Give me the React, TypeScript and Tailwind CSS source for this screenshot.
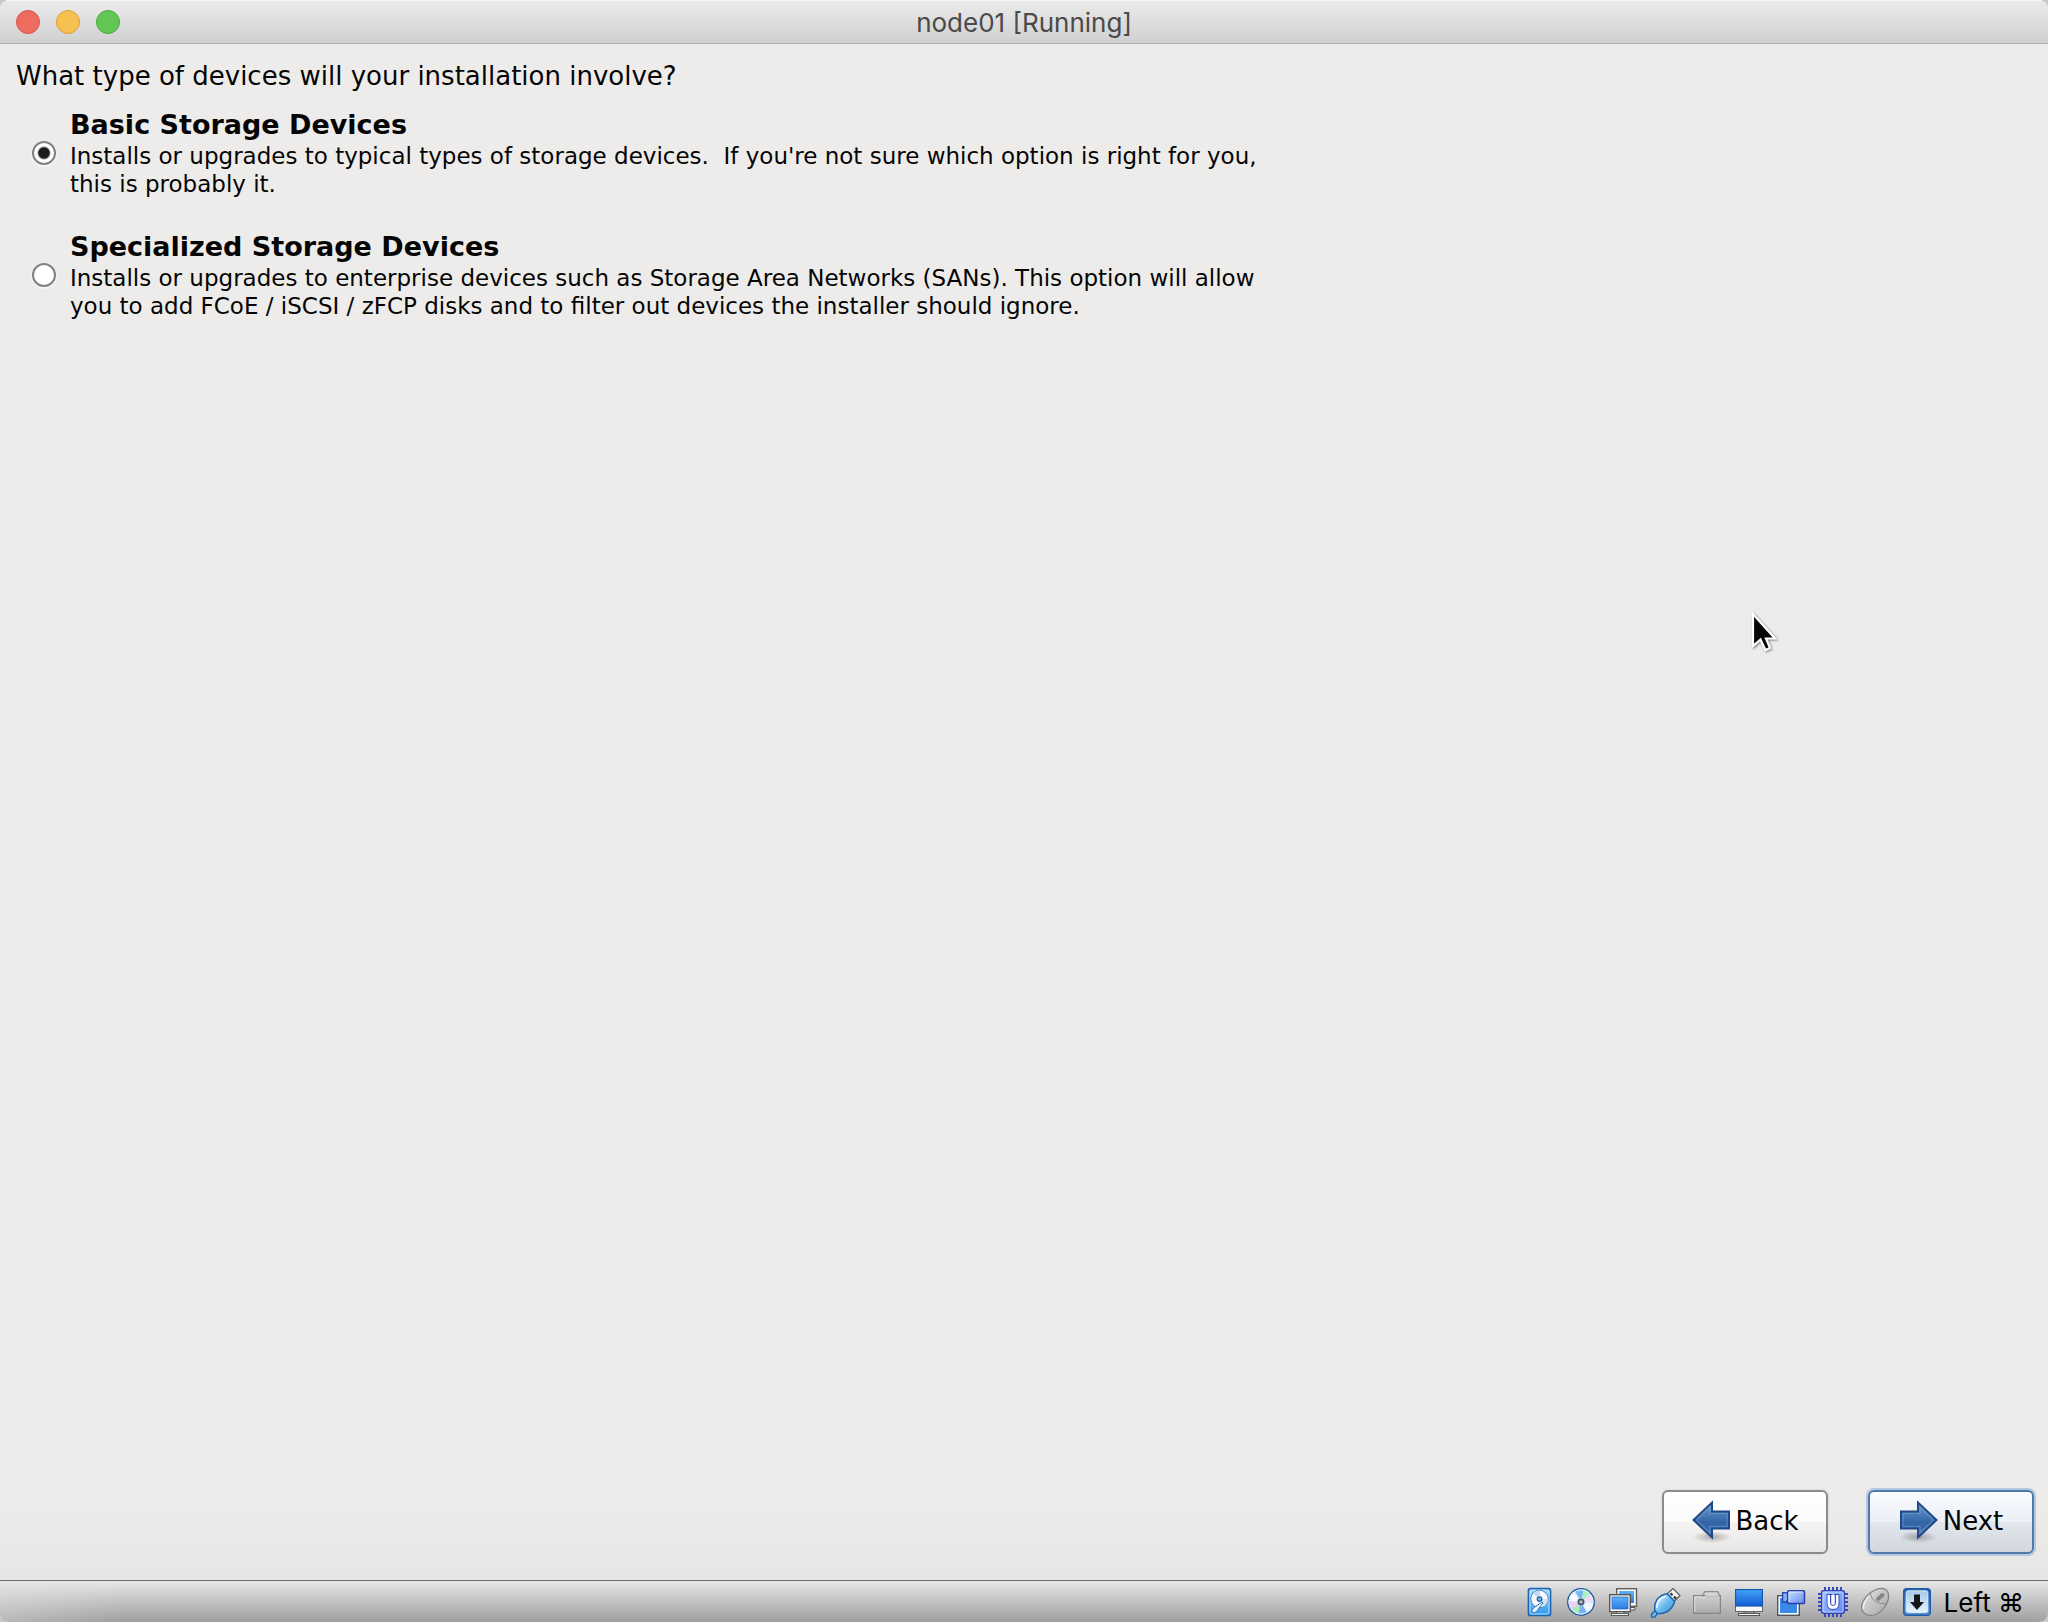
import React from "react";

function TrafficLight({ label, className }: { label: string; className: string }) {
  return <button type="button" aria-label={label} className={`size-6 rounded-full border ${className}`} />;
}

function StorageOption({
  id,
  title,
  children,
  checked,
}: {
  id: string;
  title: string;
  children: React.ReactNode;
  checked?: boolean;
}) {
  return (
    <label htmlFor={id} className="flex max-w-[1240px] items-center gap-3.5">
      <input
        id={id}
        type="radio"
        name="storage"
        defaultChecked={checked}
        className="size-6 shrink-0 appearance-none rounded-full border-2 border-[#83817f] bg-white shadow-[0_1px_1px_1px_#f6f5f4] checked:bg-[radial-gradient(circle,#1c1c1c_0,#1c1c1c_5px,#ffffff_7px)]"
      />
      <span className="block">
        <span className="block text-[27px] leading-[34px] font-bold">{title}</span>
        <span className="block text-[23px] leading-7">{children}</span>
      </span>
    </label>
  );
}

function ButtonArrow({ flip }: { flip?: boolean }) {
  return (
    <svg width="40" height="44" viewBox="0 0 40 44" className={flip ? "-scale-x-100" : ""} aria-hidden="true">
      <defs>
        <linearGradient id="arrowFill" x1="0" y1="0" x2="0" y2="1">
          <stop offset="0" stopColor="#6d9ccd" />
          <stop offset="0.5" stopColor="#3a6cae" />
          <stop offset="0.55" stopColor="#3163a5" />
          <stop offset="1" stopColor="#4577b6" />
        </linearGradient>
        <radialGradient id="arrowShadow">
          <stop offset="0" stopColor="#000" stopOpacity="0.28" />
          <stop offset="1" stopColor="#000" stopOpacity="0" />
        </radialGradient>
      </defs>
      <ellipse cx="19" cy="38" rx="19" ry="6" fill="url(#arrowShadow)" />
      <path d="M2 12.500H19V3.500L37.500 21L19 38.500V29.500H2Z" fill="url(#arrowFill)" stroke="#204a87" strokeWidth="2" />
      <path d="M4 14.500H21V8L34.500 21L21 34V27.500H4Z" fill="none" stroke="#7ba3d1" strokeOpacity="0.5" strokeWidth="1.200" />
    </svg>
  );
}

function HardDiskIcon() {
  return (
    <svg width="32" height="32" viewBox="0 0 32 32" aria-label="Hard disks">
      <defs>
        <linearGradient id="hd" x1="0" y1="0" x2="0" y2="1">
          <stop offset="0" stopColor="#a5dcfc" />
          <stop offset="1" stopColor="#2f97ea" />
        </linearGradient>
      </defs>
      <rect x="5.500" y="2.700" width="22" height="26.800" rx="2" fill="url(#hd)" stroke="#1a62b4" strokeWidth="1.700" />
      <rect x="7" y="4.200" width="19" height="23.800" rx="1" fill="none" stroke="#c4eafd" strokeWidth="0.900" />
      <circle cx="16.500" cy="13" r="8.800" fill="#f4f8fc" stroke="#3c86cb" strokeWidth="1" />
      <path d="M16.500 13L10 7.500A8.500 8.500 0 0 1 17 4.600Z" fill="#c3d9f1" />
      <path d="M16.500 13L25 13A8.500 8.500 0 0 1 21 20Z" fill="#cfe0f4" />
      <circle cx="16.500" cy="13" r="2.200" fill="#72bfee" stroke="#1d5da6" strokeWidth="1.300" />
      <path d="M20 17L13.500 25.500Q11 28 9 26Q8 24 10.500 22L19 16Z" fill="#f0f9ff" stroke="#2470b7" strokeWidth="1" />
    </svg>
  );
}

function OpticalDiscIcon() {
  return (
    <svg width="32" height="32" viewBox="0 0 32 32" aria-label="Optical drives">
      <circle cx="16" cy="16" r="13.200" fill="#c4e1f8" stroke="#22589f" strokeWidth="1.500" />
      <path d="M16 16L10 4.500A13 13 0 0 1 19 3.300Z" fill="#77b4f2" />
      <path d="M16 16L19 3.300A12.500 12.500 0 0 1 25 7Z" fill="#a9f3b5" />
      <path d="M16 16L26 8.500A12.500 12.500 0 0 1 28.500 16Z" fill="#f5d9f4" />
      <path d="M16 16L28.500 17A12.500 12.500 0 0 1 22 27Z" fill="#f0f8fe" />
      <path d="M16 16L22 27A12.500 12.500 0 0 1 13 28.200Z" fill="#79b3ef" />
      <path d="M16 16L13 28.200A12.500 12.500 0 0 1 6.500 24Z" fill="#a2f0b0" />
      <path d="M16 16L6.500 24A12.500 12.500 0 0 1 3.500 15Z" fill="#eccff3" />
      <path d="M16 16L3.500 15A12.500 12.500 0 0 1 9 5.500Z" fill="#f4fafe" />
      <circle cx="16" cy="16" r="12" fill="none" stroke="#e4f4fd" strokeWidth="0.900" />
      <circle cx="16" cy="16" r="4.300" fill="#c7dcf0" />
      <circle cx="16" cy="16" r="2.600" fill="#bdbdbd" stroke="#3c536f" strokeWidth="1.600" />
    </svg>
  );
}

function NetworkIcon() {
  return (
    <svg width="32" height="32" viewBox="0 0 32 32" aria-label="Network">
      <defs>
        <linearGradient id="net" x1="0" y1="0" x2="0" y2="1">
          <stop offset="0" stopColor="#5cb2f9" />
          <stop offset="1" stopColor="#2d78e6" />
        </linearGradient>
      </defs>
      <path d="M22 21.500H28V24H22Z" fill="#eee" stroke="#555" strokeWidth="1" />
      <rect x="9.700" y="2.700" width="19.800" height="17.600" fill="#f8f8f8" stroke="#5f5f5f" strokeWidth="1.400" />
      <rect x="12" y="5" width="15" height="12" fill="url(#net)" />
      <path d="M9.500 26V29H17V26" fill="#eee" stroke="#5b5b5b" strokeWidth="1" />
      <rect x="2.700" y="8.700" width="20.600" height="17" fill="#fafafa" stroke="#555" strokeWidth="1.400" />
      <rect x="5" y="11" width="16" height="12" fill="url(#net)" stroke="#2466c2" strokeWidth="0.700" />
      <rect x="4.500" y="27.500" width="17" height="2" fill="#f4f4f4" stroke="#5b5b5b" strokeWidth="1" />
    </svg>
  );
}

function UsbIcon() {
  return (
    <svg width="32" height="32" viewBox="0 0 32 32" aria-label="USB devices">
      <defs>
        <linearGradient id="usb" x1="0" y1="0" x2="1" y2="1">
          <stop offset="0.200" stopColor="#d0eefd" />
          <stop offset="0.500" stopColor="#6fc0f2" />
          <stop offset="1" stopColor="#338bd2" />
        </linearGradient>
      </defs>
      <path d="M17 9L24 2.500L31 9.500L24.500 16Z" fill="#f6f6f6" stroke="#5a5a5a" strokeWidth="1.200" />
      <path d="M21.500 7.300l2 2M25 10.600l2 2" stroke="#333" strokeWidth="2.200" />
      <path d="M16.500 8Q18 7.600 19 8.600L25 14.600Q25.800 15.600 25.300 16.700Q22.500 23.500 17.500 26Q13 28 8.300 27.600L5.800 25Q4.800 17 9 12.200Q12.500 9 16.500 8Z" fill="url(#usb)" stroke="#2165aa" strokeWidth="1.500" />
      <path d="M7.800 22Q8 16.500 11 13.300Q13.300 11.200 17 10.200" fill="none" stroke="#f0faff" strokeWidth="1.400" />
      <path d="M6 25L8.300 27.300L6 31L3.500 31.300L2.300 30L3 27.500Z" fill="#6bbaf0" stroke="#2165aa" strokeWidth="1.400" />
    </svg>
  );
}

function FolderIcon() {
  return (
    <svg width="32" height="32" viewBox="0 0 32 32" aria-label="Shared folders">
      <defs>
        <linearGradient id="fold" x1="0" y1="0" x2="0" y2="1">
          <stop offset="0" stopColor="#cfcfcf" />
          <stop offset="1" stopColor="#aaaaaa" />
        </linearGradient>
      </defs>
      <path d="M11 10L14 5.700H27L28.500 10V12H11Z" fill="#d6d6d6" stroke="#8d8d8d" strokeWidth="1.200" />
      <path d="M2.600 9.600H29.400V27.400H2.600Z" fill="url(#fold)" stroke="#858585" strokeWidth="1.200" />
      <path d="M3.800 26V10.800H10.500L12.500 12.700L15 9.600H27.500" fill="none" stroke="#e5e5e5" strokeWidth="0.900" />
    </svg>
  );
}

function DisplayIcon() {
  return (
    <svg width="32" height="32" viewBox="0 0 32 32" aria-label="Display">
      <defs>
        <linearGradient id="disp" x1="0" y1="0" x2="0" y2="1">
          <stop offset="0" stopColor="#41a3f6" />
          <stop offset="1" stopColor="#145bd2" />
        </linearGradient>
      </defs>
      <path d="M11 26H21V28.500H11Z" fill="#e3e3e3" stroke="#555" strokeWidth="1" />
      <rect x="2.500" y="19" width="27" height="6.500" fill="#f8f8f8" stroke="#5e6469" strokeWidth="1" />
      <rect x="2.600" y="3.600" width="26.800" height="16.400" fill="url(#disp)" stroke="#1559ae" strokeWidth="1.200" />
      <rect x="5.500" y="27.500" width="21" height="2" fill="#f5f5f5" stroke="#555" strokeWidth="1" />
    </svg>
  );
}

function RecordingIcon() {
  return (
    <svg width="32" height="32" viewBox="0 0 32 32" aria-label="Video capture">
      <defs>
        <linearGradient id="cam" x1="0" y1="0" x2="1" y2="1">
          <stop offset="0" stopColor="#c3dfff" />
          <stop offset="1" stopColor="#6a8cf0" />
        </linearGradient>
      </defs>
      <rect x="2.700" y="9.700" width="21.600" height="19.600" fill="#fafafa" stroke="#4f555d" strokeWidth="1.400" />
      <rect x="5" y="12" width="17" height="15" fill="#388ae6" />
      <path d="M7.600 6.600H11L13 8.500V14L11 16H7.600Z" fill="#7fb0f6" stroke="#2b3fa8" strokeWidth="1.300" />
      <rect x="12.700" y="4.700" width="16.800" height="12.800" rx="1" fill="url(#cam)" stroke="#2c3ca6" strokeWidth="1.500" />
      <path d="M14 16V6H28" fill="none" stroke="#dcebff" strokeWidth="0.900" />
    </svg>
  );
}

function ChipIcon() {
  return (
    <svg width="32" height="32" viewBox="0 0 32 32" aria-label="Processor features">
      <defs>
        <linearGradient id="chip" x1="0" y1="0" x2="1" y2="1">
          <stop offset="0" stopColor="#a9ccff" />
          <stop offset="1" stopColor="#5c82f0" />
        </linearGradient>
      </defs>
      <path d="M8 1V31M12 1V31M16 1V31M20 1V31M24 1V31M1 8H31M1 12H31M1 16H31M1 20H31M1 24H31" stroke="#3a4ab8" strokeWidth="2" />
      <rect x="4.700" y="4.700" width="22.600" height="22.600" rx="1.500" fill="url(#chip)" stroke="#3346b8" strokeWidth="1.500" />
      <rect x="6" y="6" width="20" height="20" rx="1" fill="none" stroke="#c6dcff" strokeWidth="0.900" />
      <path d="M10 8.500H22V17Q22 23.500 16 23.500Q10 23.500 10 17Z" fill="#f7faff" stroke="#3d50ba" strokeWidth="1" />
      <path d="M13.500 9V17.500Q14 19.500 16 19.500Q18 19.500 18.500 17.500V9" fill="#c9dbfd" stroke="#3d50ba" strokeWidth="1" />
      <path d="M16 8.500V18.500" stroke="#ffffff" strokeWidth="2" />
    </svg>
  );
}

function MouseIcon() {
  return (
    <svg width="32" height="32" viewBox="0 0 32 32" aria-label="Mouse integration">
      <defs>
        <linearGradient id="mouse" x1="0" y1="0" x2="1" y2="1">
          <stop offset="0" stopColor="#e4e4e4" />
          <stop offset="1" stopColor="#a5a5a5" />
        </linearGradient>
      </defs>
      <path d="M15 4.500Q23 0.500 27.500 4Q31.500 9 28 17Q24.500 25 17 28.500Q9 31 5 27Q0.500 23 4 15.500Q8 8 15 4.500Z" fill="url(#mouse)" stroke="#848484" strokeWidth="1.200" />
      <path d="M11 7Q13 18 28 18" fill="none" stroke="#8b8b8b" strokeWidth="1" />
      <path d="M19 13L23.500 9" stroke="#858585" strokeWidth="4" strokeLinecap="round" />
      <path d="M4.500 23Q4 16 10.500 9.500" fill="none" stroke="#f1f1f1" strokeWidth="1.300" />
    </svg>
  );
}

function KeyboardCaptureIcon() {
  return (
    <svg width="32" height="32" viewBox="0 0 32 32" aria-label="Keyboard capture">
      <defs>
        <linearGradient id="keyb" x1="0" y1="0" x2="0" y2="1">
          <stop offset="0" stopColor="#1f62b2" />
          <stop offset="1" stopColor="#5c98d8" />
        </linearGradient>
        <linearGradient id="keyf" x1="0" y1="0" x2="0" y2="1">
          <stop offset="0" stopColor="#a6c9ea" />
          <stop offset="1" stopColor="#e4f2fd" />
        </linearGradient>
      </defs>
      <rect x="2.700" y="2.700" width="26.600" height="26.600" rx="3" fill="url(#keyb)" stroke="#1f5aa6" strokeWidth="1.400" />
      <rect x="5.200" y="4.800" width="21.600" height="21.600" rx="2" fill="url(#keyf)" stroke="#e4f1fb" strokeWidth="0.900" />
      <path d="M13 8.500H19V16H23L16 24L9 16H13Z" fill="#161616" />
    </svg>
  );
}

function Pointer() {
  return (
    <svg width="32" height="44" viewBox="0 0 32 44" className="absolute top-[610px] left-[1750px] drop-shadow-[1px_1px_1px_rgba(0,0,0,0.45)]" aria-hidden="true">
      <path d="M3 4V36L10.500 29.500L15.500 40L20 38L16 28.500H25Z" fill="#060606" stroke="#fff" strokeWidth="2.200" />
    </svg>
  );
}

export default function App() {
  return (
    <div className="bg-[#c9c9c9]">
      <div className="relative flex min-h-screen flex-col overflow-hidden rounded-[9px] bg-[#edecea] font-['DejaVu_Sans',sans-serif] text-[#050505]">
        <header className="grid h-11 grid-cols-[1fr_auto_1fr] items-center border-t border-b border-t-[#f8f8f8] border-b-[#b0afae] bg-linear-to-b from-[#ebebeb] to-[#d0d0d0] px-4">
          <div className="flex gap-4">
            <TrafficLight label="Close" className="border-[#dc5449] bg-[#ee6b60]" />
            <TrafficLight label="Minimize" className="border-[#dca03c] bg-[#f6c050]" />
            <TrafficLight label="Zoom" className="border-[#4aa93c] bg-[#62c655]" />
          </div>
          <h1 className="pt-0.5 font-[Inter,sans-serif] text-[26px] leading-8 text-[#4a4a4a]">node01 [Running]</h1>
        </header>

        <main className="flex flex-1 flex-col bg-[linear-gradient(to_top,#e7e6e4,#edecea_80px)]">
          <fieldset className="flex-1 pt-4">
            <legend className="float-left w-full px-4 text-[26px] leading-8">What type of devices will your installation involve?</legend>
            <div className="clear-both flex flex-col gap-8 pt-4 pl-8">
              <StorageOption id="basic" title="Basic Storage Devices" checked>
                Installs or upgrades to typical types of storage devices.&nbsp; If you&#39;re not sure which option is right for you, this is probably it.
              </StorageOption>
              <StorageOption id="specialized" title="Specialized Storage Devices">
                Installs or upgrades to enterprise devices such as Storage Area Networks (SANs). This option will allow you to add FCoE / iSCSI / zFCP disks and to filter out devices the installer should ignore.
              </StorageOption>
            </div>
          </fieldset>

          <div className="flex justify-end gap-10 pr-3.5 pb-[26px] text-[26px] leading-8">
            <button type="button" className="flex h-16 w-[166px] items-center justify-center gap-1 rounded-md border-2 border-[#8d8b89] bg-[linear-gradient(#ffffff,#fbfbfb_50%,#f5f4f4_50%,#e8e7e5)] pb-0.5 shadow-[0_0_1px_1px_#e2e1df]">
              <ButtonArrow flip />
              Back
            </button>
            <button type="button" className="flex h-16 w-[166px] items-center justify-center gap-1 rounded-md border-2 border-[#5279a9] bg-[linear-gradient(#f8fbff,#ebeff6_50%,#e2e6ed_50%,#d3d7dd)] pb-0.5 shadow-[0_0_0_2px_#b3c8e2]">
              <ButtonArrow />
              Next
            </button>
          </div>
        </main>

        <footer className="flex h-[42px] items-center justify-end gap-2.5 border-t border-[#6a6a6a] bg-[linear-gradient(to_right,rgba(230,230,230,0.35),rgba(230,230,230,0)_120px),linear-gradient(#e7e7e7,#9f9f9f)] pr-6">
          <HardDiskIcon />
          <OpticalDiscIcon />
          <NetworkIcon />
          <UsbIcon />
          <FolderIcon />
          <DisplayIcon />
          <RecordingIcon />
          <ChipIcon />
          <MouseIcon />
          <KeyboardCaptureIcon />
          <span className="pl-px pt-0.5 font-[Inter,'DejaVu_Sans',sans-serif] text-[26px] leading-8 text-black">Left ⌘</span>
        </footer>

        <Pointer />
      </div>
    </div>
  );
}
